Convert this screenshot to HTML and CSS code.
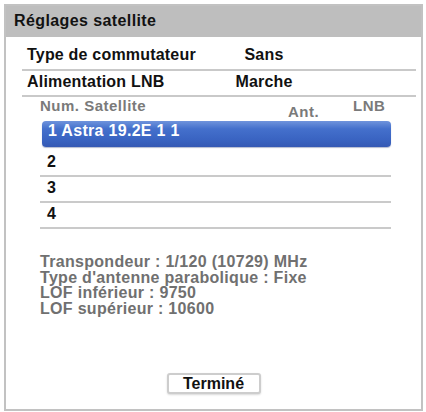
FILE: index.html
```html
<!DOCTYPE html>
<html lang="fr">
<head>
<meta charset="utf-8">
<title>Réglages satellite</title>
<link rel="stylesheet" href="styles.css">
</head>
<body>
<div class="panel">
  <div class="header">Réglages satellite</div>
  <div class="setting first">
    <span class="label">Type de commutateur</span>
    <span class="value">Sans</span>
  </div>
  <div class="setting">
    <span class="label">Alimentation LNB</span>
    <span class="value">Marche</span>
  </div>
  <div class="list">
    <div class="list-head">
      <span>Num. Satellite</span>
      <span class="ant">Ant.</span>
      <span>LNB</span>
    </div>
    <div class="item selected">1 Astra 19.2E 1 1</div>
    <div class="item">2</div>
    <div class="item">3</div>
    <div class="item">4</div>
  </div>
  <div class="info">
    <div>Transpondeur : 1/120 (10729) MHz</div>
    <div>Type d'antenne parabolique : Fixe</div>
    <div>LOF inférieur : 9750</div>
    <div>LOF supérieur : 10600</div>
  </div>
  <div class="actions">
    <button class="btn">Terminé</button>
  </div>
</div>
</body>
</html>
```

FILE: styles.css
```css
html, body {
  margin: 0;
  padding: 0;
  background: #ffffff;
}
body {
  font-family: "Liberation Sans", Arial, Helvetica, sans-serif;
  font-weight: bold;
  color: #111111;
}
.panel {
  box-sizing: border-box;
  width: 419px;
  height: 407px;
  margin: 4px 0 0 4px;
  border: 2px solid #c2c2c2;
  display: flex;
  flex-direction: column;
  background: #ffffff;
}
.header {
  box-sizing: border-box;
  height: 31px;
  background: #bebebe;
  padding: 7px 0 0 8px;
  font-size: 16px;
  line-height: 16px;
  letter-spacing: 0.4px;
  color: #121212;
}
.setting {
  display: grid;
  grid-template-columns: 187px 100px;
  margin: 0 5px 0 16px;
  padding: 3px 0 5px 5px;
  border-bottom: 2px solid #c9c9c9;
  font-size: 16px;
  line-height: 16px;
  letter-spacing: 0.2px;
}
.setting.first {
  padding-top: 10px;
  padding-bottom: 6px;
}
.setting .value {
  text-align: center;
}
.list {
  margin-left: 34px;
  width: 351px;
}
.list-head {
  display: grid;
  grid-template-columns: 248px 65px auto;
  box-sizing: border-box;
  height: 24px;
  padding-top: 1px;
  font-size: 15px;
  line-height: 15px;
  letter-spacing: 0.5px;
  color: #7a7a7a;
}
.list-head .ant {
  margin-top: 6px;
}
.item {
  padding: 3px 0 5px 7px;
  border-bottom: 2px solid #cacaca;
  font-size: 16px;
  line-height: 16px;
  letter-spacing: 0.3px;
}
.item.selected {
  box-sizing: border-box;
  height: 26px;
  margin: 0 0 4px 2px;
  width: 349px;
  padding: 2px 0 0 6px;
  border: none;
  border-radius: 4px;
  color: #ffffff;
  background: linear-gradient(to bottom, #6f93dc 0%, #4470cc 30%, #3a64c2 70%, #3559b4 100%);
  box-shadow: 0 1px 1px rgba(40, 60, 120, 0.35);
}
.info {
  margin: 25px 0 0 34px;
  font-size: 16px;
  line-height: 15.5px;
  letter-spacing: 0.3px;
  color: #707070;
}
.actions {
  margin-top: auto;
  margin-bottom: 15px;
  display: flex;
  justify-content: center;
}
.btn {
  box-sizing: border-box;
  width: 94px;
  height: 21px;
  padding: 0;
  background: #ffffff;
  border: 2px solid #cdcdcd;
  border-radius: 3px;
  box-shadow: 0 1px 2px rgba(0, 0, 0, 0.15);
  font-family: "Liberation Sans", Arial, Helvetica, sans-serif;
  font-weight: bold;
  font-size: 16px;
  line-height: 16px;
  color: #111111;
}
```
